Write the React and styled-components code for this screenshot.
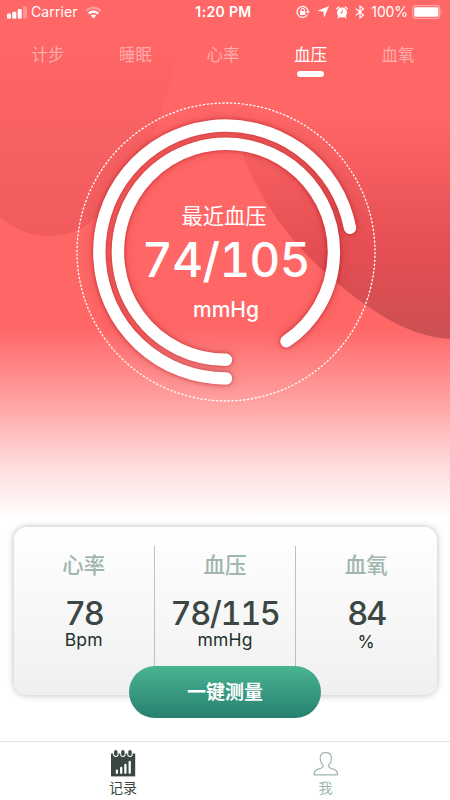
import React from "react";
import styled, { createGlobalStyle } from "styled-components";

const GlobalStyle = createGlobalStyle`
  * {
    box-sizing: border-box;
  }
  body {
    margin: 0;
    background: #fff;
    font-family: Inter, "Noto Sans CJK SC", sans-serif;
  }
`;

const Screen = styled.div`
  display: flex;
  flex-direction: column;
  width: 450px;
  height: 800px;
  overflow: hidden;
  background: #fff;
`;

const Hero = styled.div`
  display: grid;
  height: 527px;
  flex-shrink: 0;
  background: linear-gradient(#ff6666 0, #ff6666 328px, #ffa0a0 400px, #ffdcdc 466px, #fff 520px);

  > * {
    grid-area: 1 / 1;
  }
`;

const HeroContent = styled.div`
  display: flex;
  flex-direction: column;
  align-items: center;
`;

const StatusBar = styled.div`
  display: grid;
  grid-template-columns: 1fr auto 1fr;
  align-items: center;
  width: 100%;
  height: 24px;
  padding: 0 7px;
  color: #fff;
  font-size: 14px;
  line-height: 24px;
`;

const StatusLeft = styled.div`
  display: flex;
  align-items: center;
  letter-spacing: 0.1px;

  span {
    margin: 0 7px 0 4px;
  }
`;

const Clock = styled.div`
  font-weight: 600;
  font-size: 14px;
  letter-spacing: 0.35px;
  padding-right: 3px;
`;

const StatusRight = styled.div`
  display: flex;
  align-items: center;
  justify-content: flex-end;

  span {
    margin: 0 4px 0 6px;
    font-size: 14px;
    letter-spacing: -0.1px;
  }
`;

const StatusIcons = styled.div`
  display: flex;
  align-items: center;
  gap: 7px;
`;

const Tabs = styled.div`
  display: grid;
  grid-template-columns: repeat(5, 87.5px);
  height: 53px;
  padding-top: 19px;
  margin-right: 4px;
`;

const Tab = styled.div`
  display: flex;
  flex-direction: column;
  align-items: center;
  color: ${(p) => (p.$active ? "#fff" : "rgba(255, 255, 255, 0.47)")};
  font-size: 16.5px;
  line-height: 24px;

  &::after {
    content: "";
    width: 27px;
    height: 5.5px;
    margin-top: 4px;
    border-radius: 3px;
    background: ${(p) => (p.$active ? "#fff" : "transparent")};
  }
`;

const Gauge = styled.div`
  display: grid;
  width: 320px;
  height: 320px;
  margin: 15px 0 0 2px;

  > * {
    grid-area: 1 / 1;
  }
`;

const Rings = styled.g`
  filter: drop-shadow(0 0 2px rgba(180, 0, 10, 0.6)) drop-shadow(0 0 6px rgba(90, 20, 20, 0.14));
`;

const Reading = styled.div`
  display: flex;
  flex-direction: column;
  align-items: center;
  padding-top: 108px;
  color: #fff;
`;

const ReadingLabel = styled.div`
  height: 32px;
  margin-right: 4px;
  font-size: 21.3px;
  line-height: 32px;
`;

const ReadingValue = styled.div`
  height: 56px;
  font-size: 47.5px;
  font-weight: 500;
  line-height: 56px;
  font-variant-numeric: tabular-nums;
  letter-spacing: -0.6px;
`;

const ReadingUnit = styled.div`
  margin-top: 7px;
  font-size: 21px;
  font-weight: 500;
  line-height: 30px;
`;

const Card = styled.div`
  display: grid;
  grid-template-columns: 141.5px 141px 140.5px;
  width: 423px;
  height: 168px;
  flex-shrink: 0;
  margin-left: 13.5px;
  padding-top: 19px;
  border-radius: 13px;
  background: linear-gradient(#fff, #f0f0f0);
  box-shadow: 0 0 7px rgba(0, 0, 0, 0.28);
`;

const Metric = styled.div`
  display: flex;
  flex-direction: column;
  align-items: center;
  height: 121px;
  border-right: ${(p) => (p.$last ? "0" : "1px solid #b3c5c0")};
  color: #1f312b;
`;

const MetricName = styled.div`
  height: 40px;
  color: #a0b5ae;
  font-size: 21.5px;
  font-weight: 500;
  line-height: 39px;
`;

const MetricValue = styled.div`
  height: 36px;
  margin-top: 10px;
  color: #3c4743;
  font-size: 32.5px;
  font-weight: 500;
  line-height: 36px;
  font-variant-numeric: tabular-nums;
  letter-spacing: ${(p) => (p.$wide ? "-1.4px" : "-2px")};
`;

const MetricUnit = styled.div`
  margin-top: ${(p) => (p.$low ? "0" : "-2px")};
  font-size: 17.5px;
  font-weight: 400;
  line-height: 20px;
  letter-spacing: 0.2px;
`;

const MeasureButton = styled.button`
  align-self: center;
  width: 192px;
  height: 52px;
  flex-shrink: 0;
  margin-top: -29px;
  padding: 0 0 4px 0;
  border: 0;
  border-radius: 26px;
  background: linear-gradient(#4ab492, #278070);
  color: #fff;
  font-family: "Noto Sans CJK SC", sans-serif;
  font-size: 19px;
  font-weight: 700;
  z-index: 1;
`;

const TabBar = styled.div`
  display: grid;
  grid-template-columns: 246px 159px;
  height: 59px;
  margin-top: auto;
  border-top: 1px solid #dfe6e4;
  background: #fff;
`;

const TabBarItem = styled.div`
  display: flex;
  flex-direction: column;
  align-items: center;
  padding-top: 8px;
  color: ${(p) => (p.$active ? "#3a4743" : "#a0b5ae")};
  font-size: 14px;
  line-height: 20px;
`;

const SignalIcon = () => (
  <svg width="20" height="13" viewBox="0 0 20 13" fill="#fff">
    <rect x="0" y="7.5" width="4" height="5.2" rx="1" />
    <rect x="5.3" y="5.7" width="4" height="7" rx="1" />
    <rect x="10.7" y="3" width="4" height="9.7" rx="1" />
    <rect x="16" y="0.3" width="4" height="12.4" rx="1" opacity="0.3" />
  </svg>
);

const WifiIcon = () => (
  <svg width="17" height="13" viewBox="0 0 17 13" fill="none" stroke="#fff" strokeWidth="2.3">
    <path d="M1 5 Q8.5 -1.8 16 5" opacity="0.35" />
    <path d="M3.7 7.7 Q8.5 3.3 13.3 7.7" />
    <path d="M5.7 9.6 Q8.5 7.3 11.3 9.6 L8.5 12.5 Z" fill="#fff" stroke="none" />
  </svg>
);

const LockIcon = () => (
  <svg width="14" height="14" viewBox="0 0 14 14" fill="none" stroke="#fff" strokeWidth="1.2">
    <path d="M11.3 9.7 A5.5 5.5 0 1 1 12 6.2" />
    <path d="M9.9 6.2 H14 L12 8.8 Z" fill="#fff" stroke="none" />
    <rect x="4" y="6" width="5.4" height="4" rx="0.5" fill="#fff" stroke="none" />
    <path d="M5 6 V5 A1.7 1.7 0 0 1 8.4 5 V6" strokeWidth="1" />
  </svg>
);

const ArrowIcon = () => (
  <svg width="12" height="12" viewBox="0 0 12 12" fill="#fff">
    <path d="M12 0 L7.1 11.8 L6.4 5.6 L0.2 5.1 Z" />
  </svg>
);

const AlarmIcon = () => (
  <svg width="12" height="13" viewBox="0 0 12 13">
    <path d="M0.8 2.8 L2.8 1 M11.2 2.8 L9.2 1 M3 10.6 L2 11.8 M9 10.6 L10 11.8" stroke="#fff" strokeWidth="1.3" strokeLinecap="round" />
    <circle cx="6" cy="6.6" r="5" fill="#fff" />
    <path d="M6.2 3.6 V7 H3.8" fill="none" stroke="#ff6666" strokeWidth="0.8" />
  </svg>
);

const BluetoothIcon = () => (
  <svg width="10" height="14" viewBox="0 0 10 14" fill="none" stroke="#fff" strokeWidth="1.2">
    <path d="M1 3.7 L8.4 10 L5 13 V1 L8.4 4.1 L1 10.3" />
  </svg>
);

const BatteryIcon = () => (
  <svg width="31" height="14" viewBox="0 0 31 14">
    <rect x="0.7" y="0.7" width="27" height="12.6" rx="2.5" fill="none" stroke="#fff" strokeWidth="1.2" opacity="0.4" />
    <rect x="2.2" y="2.3" width="24.2" height="9.4" rx="1" fill="#fff" />
    <path d="M29 5 Q31 7 29 9.2 Z" fill="#fff" opacity="0.4" />
  </svg>
);

const RecordIcon = () => (
  <svg width="26" height="28" viewBox="0 0 26 28">
    <path d="M1 3.5 H25.2 V26.4 H1 Z" fill="#3a4743" />
    {[5.8, 12.9, 20].map((x) => (
      <g key={x}>
        <rect x={x - 2.7} y="-1" width="5.4" height="8" rx="2.7" fill="#fff" />
        <rect x={x - 1.7} y="0" width="3.4" height="6" rx="1.7" fill="#3a4743" />
      </g>
    ))}
    <path d="M6.9 20.6 V22.8 M11.2 17.9 V22.8 M15.4 14.9 V22.8 M19.7 12 V22.8" stroke="#fff" strokeWidth="2.3" strokeLinecap="round" />
  </svg>
);

const PersonIcon = () => (
  <svg width="26" height="28" viewBox="0 0 26 28" fill="none" stroke="#a0b5ae" strokeWidth="1.2">
    <path d="M10.2 15.5 C8.4 14 7.2 11.5 7.2 7.9 C7.2 4.4 9.6 2.6 12.8 2.6 C16 2.6 18.4 4.4 18.4 7.9 C18.4 11.5 17.2 14 15.4 15.5 C15.2 17 16 17.7 17.8 18.3 C21.8 19.2 24.5 20 24.5 24.8 H1.2 C1.2 20 3.8 19.2 7.8 18.3 C9.6 17.7 10.4 17 10.2 15.5 Z" strokeLinejoin="round" />
  </svg>
);

// soft hills behind the gauge
const Waves = () => (
  <svg width="450" height="527" viewBox="0 0 450 527">
    <defs>
      <linearGradient id="leftWave" x1="0" y1="40" x2="0" y2="236" gradientUnits="userSpaceOnUse">
        <stop offset="0" stopColor="#b83038" stopOpacity="0" />
        <stop offset="1" stopColor="#b83038" stopOpacity="0.2" />
      </linearGradient>
      <linearGradient id="rightWave" x1="0" y1="115" x2="0" y2="339" gradientUnits="userSpaceOnUse">
        <stop offset="0" stopColor="#b0202c" stopOpacity="0" />
        <stop offset="0.62" stopColor="#b0202c" stopOpacity="0.34" />
        <stop offset="1" stopColor="#803038" stopOpacity="0.42" />
      </linearGradient>
    </defs>
    <path d="M0 0 H184 C176 60 170 95 150 140 C128 190 95 236 50 236 C30 236 15 229 0 217 Z" fill="url(#leftWave)" />
    <path d="M450 60 H230 C234 120 239 148 250 172 C270 216 302 254 336 282 C372 312 410 337 450 339 Z" fill="url(#rightWave)" />
  </svg>
);

const GaugeRings = () => (
  <svg width="320" height="320" viewBox="66 92 320 320" fill="none" stroke="#fff">
    <circle cx="226" cy="252" r="149" strokeWidth="1.3" strokeDasharray="2.3 1.6" />
    <Rings strokeWidth="12.4" strokeLinecap="round">
      <path d="M226 378.5 A126.5 126.5 0 1 1 350 227.8" />
      <path d="M226 359.8 A108 108 0 1 1 286.5 341.2" />
    </Rings>
  </svg>
);

const tabs = ["计步", "睡眠", "心率", "血压", "血氧"];

const metrics = [
  { name: "心率", value: "78", unit: "Bpm" },
  { name: "血压", value: "78/115", unit: "mmHg" },
  { name: "血氧", value: "84", unit: "%" },
];

const App = () => (
  <Screen>
    <GlobalStyle />
    <Hero>
      <Waves />
      <HeroContent>
        <StatusBar>
          <StatusLeft>
            <SignalIcon />
            <span>Carrier</span>
            <WifiIcon />
          </StatusLeft>
          <Clock>1:20 PM</Clock>
          <StatusRight>
            <StatusIcons>
              <LockIcon />
              <ArrowIcon />
              <AlarmIcon />
              <BluetoothIcon />
            </StatusIcons>
            <span>100%</span>
            <BatteryIcon />
          </StatusRight>
        </StatusBar>
        <Tabs>
          {tabs.map((tab) => (
            <Tab key={tab} $active={tab === "血压"}>{tab}</Tab>
          ))}
        </Tabs>
        <Gauge>
          <GaugeRings />
          <Reading>
            <ReadingLabel>最近血压</ReadingLabel>
            <ReadingValue>74/105</ReadingValue>
            <ReadingUnit>mmHg</ReadingUnit>
          </Reading>
        </Gauge>
      </HeroContent>
    </Hero>
    <Card>
      {metrics.map((metric, index) => (
        <Metric key={metric.name} $last={index === metrics.length - 1}>
          <MetricName>{metric.name}</MetricName>
          <MetricValue $wide={metric.value.length > 2}>{metric.value}</MetricValue>
          <MetricUnit $low={metric.unit === "%"}>{metric.unit}</MetricUnit>
        </Metric>
      ))}
    </Card>
    <MeasureButton>一键测量</MeasureButton>
    <TabBar>
      <TabBarItem $active>
        <RecordIcon />
        记录
      </TabBarItem>
      <TabBarItem>
        <PersonIcon />
        我
      </TabBarItem>
    </TabBar>
  </Screen>
);

export default App;
